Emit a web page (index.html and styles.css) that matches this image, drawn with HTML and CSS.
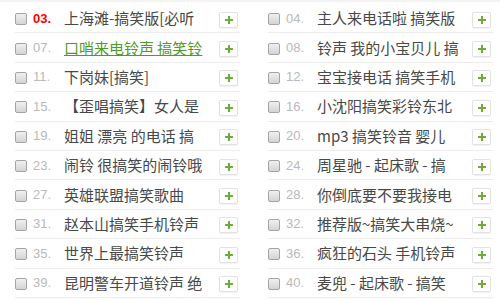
FILE: index.html
```html
<!DOCTYPE html>
<html lang="zh">
<head>
<meta charset="utf-8">
<link rel="stylesheet" href="styles.css">
</head>
<body>
<div class="board">
  <ul class="col">
    <li class="row"><span class="cb"></span><span class="num hot">03.</span><span class="title">上海滩-搞笑版[必听</span><span class="add"><svg viewBox="0 0 8 8"><rect x="3" y="0" width="2" height="8"/><rect x="0" y="3" width="8" height="2"/></svg></span></li>
    <li class="row"><span class="cb"></span><span class="num">07.</span><a class="title link">口哨来电铃声 搞笑铃</a><span class="add"><svg viewBox="0 0 8 8"><rect x="3" y="0" width="2" height="8"/><rect x="0" y="3" width="8" height="2"/></svg></span></li>
    <li class="row"><span class="cb"></span><span class="num">11.</span><span class="title">下岗妹[搞笑]</span><span class="add"><svg viewBox="0 0 8 8"><rect x="3" y="0" width="2" height="8"/><rect x="0" y="3" width="8" height="2"/></svg></span></li>
    <li class="row"><span class="cb"></span><span class="num">15.</span><span class="title">【歪唱搞笑】女人是</span><span class="add"><svg viewBox="0 0 8 8"><rect x="3" y="0" width="2" height="8"/><rect x="0" y="3" width="8" height="2"/></svg></span></li>
    <li class="row"><span class="cb"></span><span class="num">19.</span><span class="title">姐姐 漂亮 的电话 搞</span><span class="add"><svg viewBox="0 0 8 8"><rect x="3" y="0" width="2" height="8"/><rect x="0" y="3" width="8" height="2"/></svg></span></li>
    <li class="row"><span class="cb"></span><span class="num">23.</span><span class="title">闹铃 很搞笑的闹铃哦</span><span class="add"><svg viewBox="0 0 8 8"><rect x="3" y="0" width="2" height="8"/><rect x="0" y="3" width="8" height="2"/></svg></span></li>
    <li class="row"><span class="cb"></span><span class="num">27.</span><span class="title">英雄联盟搞笑歌曲</span><span class="add"><svg viewBox="0 0 8 8"><rect x="3" y="0" width="2" height="8"/><rect x="0" y="3" width="8" height="2"/></svg></span></li>
    <li class="row"><span class="cb"></span><span class="num">31.</span><span class="title">赵本山搞笑手机铃声</span><span class="add"><svg viewBox="0 0 8 8"><rect x="3" y="0" width="2" height="8"/><rect x="0" y="3" width="8" height="2"/></svg></span></li>
    <li class="row"><span class="cb"></span><span class="num">35.</span><span class="title">世界上最搞笑铃声</span><span class="add"><svg viewBox="0 0 8 8"><rect x="3" y="0" width="2" height="8"/><rect x="0" y="3" width="8" height="2"/></svg></span></li>
    <li class="row"><span class="cb"></span><span class="num">39.</span><span class="title">昆明警车开道铃声 绝</span><span class="add"><svg viewBox="0 0 8 8"><rect x="3" y="0" width="2" height="8"/><rect x="0" y="3" width="8" height="2"/></svg></span></li>
  </ul>
  <ul class="col">
    <li class="row"><span class="cb"></span><span class="num">04.</span><span class="title">主人来电话啦 搞笑版</span><span class="add"><svg viewBox="0 0 8 8"><rect x="3" y="0" width="2" height="8"/><rect x="0" y="3" width="8" height="2"/></svg></span></li>
    <li class="row"><span class="cb"></span><span class="num">08.</span><span class="title">铃声 我的小宝贝儿 搞</span><span class="add"><svg viewBox="0 0 8 8"><rect x="3" y="0" width="2" height="8"/><rect x="0" y="3" width="8" height="2"/></svg></span></li>
    <li class="row"><span class="cb"></span><span class="num">12.</span><span class="title">宝宝接电话 搞笑手机</span><span class="add"><svg viewBox="0 0 8 8"><rect x="3" y="0" width="2" height="8"/><rect x="0" y="3" width="8" height="2"/></svg></span></li>
    <li class="row"><span class="cb"></span><span class="num">16.</span><span class="title">小沈阳搞笑彩铃东北</span><span class="add"><svg viewBox="0 0 8 8"><rect x="3" y="0" width="2" height="8"/><rect x="0" y="3" width="8" height="2"/></svg></span></li>
    <li class="row"><span class="cb"></span><span class="num">20.</span><span class="title">mp3 搞笑铃音 婴儿</span><span class="add"><svg viewBox="0 0 8 8"><rect x="3" y="0" width="2" height="8"/><rect x="0" y="3" width="8" height="2"/></svg></span></li>
    <li class="row"><span class="cb"></span><span class="num">24.</span><span class="title">周星驰 - 起床歌 - 搞</span><span class="add"><svg viewBox="0 0 8 8"><rect x="3" y="0" width="2" height="8"/><rect x="0" y="3" width="8" height="2"/></svg></span></li>
    <li class="row"><span class="cb"></span><span class="num">28.</span><span class="title">你倒底要不要我接电</span><span class="add"><svg viewBox="0 0 8 8"><rect x="3" y="0" width="2" height="8"/><rect x="0" y="3" width="8" height="2"/></svg></span></li>
    <li class="row"><span class="cb"></span><span class="num">32.</span><span class="title">推荐版~搞笑大串烧~</span><span class="add"><svg viewBox="0 0 8 8"><rect x="3" y="0" width="2" height="8"/><rect x="0" y="3" width="8" height="2"/></svg></span></li>
    <li class="row"><span class="cb"></span><span class="num">36.</span><span class="title">疯狂的石头 手机铃声</span><span class="add"><svg viewBox="0 0 8 8"><rect x="3" y="0" width="2" height="8"/><rect x="0" y="3" width="8" height="2"/></svg></span></li>
    <li class="row"><span class="cb"></span><span class="num">40.</span><span class="title">麦兜 - 起床歌 - 搞笑</span><span class="add"><svg viewBox="0 0 8 8"><rect x="3" y="0" width="2" height="8"/><rect x="0" y="3" width="8" height="2"/></svg></span></li>
  </ul>
</div>
</body>
</html>
```

FILE: styles.css
```css
* { box-sizing: border-box; }
html, body { margin: 0; padding: 0; background: #fff; }
body {
  width: 500px;
  height: 300px;
  overflow: hidden;
  font-family: "Noto Sans CJK SC", "Liberation Sans", sans-serif;
}
.board {
  display: flex;
  gap: 28px;
  padding: 2px 0 0 15px;
  border-top: 2px solid #f4f4f4;
}
.col {
  list-style: none;
  margin: 0;
  padding: 0;
  width: 225px;
}
.row {
  display: flex;
  align-items: center;
  height: 29.4px;
  border-bottom: 1px solid #ececec;
}
.cb {
  flex: none;
  width: 12px;
  height: 12px;
  margin-top: 2px;
  border: 1px solid #a4a4a4;
  border-radius: 2px;
  background: linear-gradient(#f0f0f0, #d4d4d4);
}
.num {
  flex: none;
  width: 31px;
  margin-left: 6px;
  font-family: "Liberation Sans", Arial, sans-serif;
  font-size: 13px;
  color: #b9b9b9;
}
.num.hot {
  color: #ff0000;
  font-weight: bold;
}
.title {
  flex: none;
  width: 150px;
  overflow: hidden;
  white-space: nowrap;
  font-size: 15px;
  line-height: 20px;
  color: #484848;
}
.link {
  color: #4f9a2b;
  text-decoration: underline;
}
.add {
  flex: none;
  margin-left: auto;
  margin-right: 2px;
  margin-top: 3px;
  width: 19px;
  height: 16px;
  display: flex;
  align-items: center;
  justify-content: center;
  border: 1px solid #e2e2e2;
  border-radius: 2px;
  background: #fff;
  box-shadow: 0 1px 1px rgba(0,0,0,0.06);
}
.add svg {
  width: 8px;
  height: 8px;
  fill: #6cae34;
}
```
